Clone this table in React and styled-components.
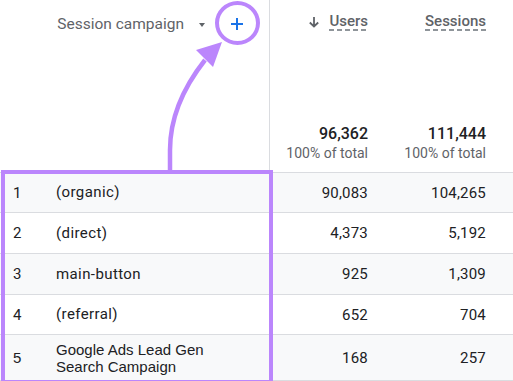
import React from 'react';
import styled, { createGlobalStyle } from 'styled-components';

const rows = [
  { n: 1, label: '(organic)', users: '90,083', sessions: '104,265', h: 40 },
  { n: 2, label: '(direct)', users: '4,373', sessions: '5,192', h: 41 },
  { n: 3, label: 'main-button', users: '925', sessions: '1,309', h: 41 },
  { n: 4, label: '(referral)', users: '652', sessions: '704', h: 40 },
  { n: 5, label: 'Google Ads Lead Gen Search Campaign', users: '168', sessions: '257', h: 46, tall: true },
];

const metrics = [
  { name: 'Users', total: '96,362', sorted: true },
  { name: 'Sessions', total: '111,444' },
];

export default function App() {
  return (
    <Page>
      <GlobalStyle />
      <Table>
        <DimHead>
          <DimTitle>Session campaign</DimTitle>
          <Caret />
          <AddButton>
            <svg width="12" height="12" viewBox="0 0 12 12">
              <path d="M6 0v12M0 6h12" stroke="#1a73e8" strokeWidth="2" />
            </svg>
          </AddButton>
        </DimHead>
        {metrics.map(m => (
          <MetricHead key={m.name}>
            <MetricTitle>
              {m.sorted && (
                <svg width="12" height="12" viewBox="0 0 12 12">
                  <path d="M6 1v9.5M1.8 6.5L6 10.5l4.2-4" stroke="#5f6368" strokeWidth="1.8" fill="none" />
                </svg>
              )}
              <Dashed>{m.name}</Dashed>
            </MetricTitle>
            <Totals>
              <Total>{m.total}</Total>
              <Share>100% of total</Share>
            </Totals>
          </MetricHead>
        ))}
        <HeadFill />

        {rows.map((r, i) => (
          <React.Fragment key={r.n}>
            <DimCell $odd={i % 2 === 0} $h={r.h}>
              <Index $alt={r.tall}>{r.n}</Index>
              <Label $alt={r.tall}>{r.tall ? <>Google Ads Lead Gen<br />Search Campaign</> : r.label}</Label>
            </DimCell>
            <NumCell $odd={i % 2 === 0} $h={r.h}>{r.users}</NumCell>
            <NumCell $odd={i % 2 === 0} $h={r.h}>{r.sessions}</NumCell>
            <FillCell $odd={i % 2 === 0} $h={r.h} />
          </React.Fragment>
        ))}
      </Table>

      <Highlight />
      <Ring />
      <Pointer width="513" height="381" viewBox="0 0 513 381">
        <path d="M170 172 L170 150 C170 118 183 88 205 60" stroke="#bb86fc" strokeWidth="4.5" fill="none" />
        <polygon points="222,42 196,50 213,67" fill="#bb86fc" />
      </Pointer>
    </Page>
  );
}

const GlobalStyle = createGlobalStyle`
  body {
    margin: 0;
    background: #fff;
    font-family: Roboto, "Liberation Sans", sans-serif;
    overflow: hidden;
  }
`;

const Page = styled.div`
  position: relative;
  width: 513px;
  height: 381px;
  overflow: hidden;
  background: #fff;
`;

const Table = styled.div`
  display: grid;
  grid-template-columns: 270px 108px 118px 1fr;
`;

const DimHead = styled.div`
  height: 173px;
  box-sizing: border-box;
  border-right: 1px solid #dadce0;
  border-bottom: 1px solid #dadce0;
  display: flex;
  align-items: flex-start;
  justify-content: flex-end;
  padding: 13px 20px 0 0;
`;

const DimTitle = styled.span`
  font-size: 15.5px;
  line-height: 23px;
  color: #5f6368;
`;

const Caret = styled.span`
  width: 0;
  height: 0;
  margin: 10px 0 0 15px;
  border-left: 3.5px solid transparent;
  border-right: 3.5px solid transparent;
  border-top: 4px solid #5f6368;
`;

const AddButton = styled.span`
  width: 24px;
  height: 22px;
  margin-left: 20px;
  display: flex;
  align-items: center;
  justify-content: center;
`;

const MetricHead = styled.div`
  height: 173px;
  box-sizing: border-box;
  border-bottom: 1px solid #dadce0;
  display: flex;
  flex-direction: column;
  justify-content: space-between;
  align-items: flex-end;
  padding: 12px 10px 10px 0;
`;

const MetricTitle = styled.div`
  display: flex;
  align-items: center;
  gap: 9px;
  font-size: 15px;
  font-weight: 500;
  color: #5f6368;
`;

const Dashed = styled.span`
  line-height: 19px;
  background: repeating-linear-gradient(to right, #8f959a 0 5px, transparent 5px 8px) left bottom / 100% 2px no-repeat;
`;

const Totals = styled.div`
  display: flex;
  flex-direction: column;
  align-items: flex-end;
  gap: 2px;
`;

const Total = styled.span`
  font-size: 16px;
  font-weight: 500;
  color: #202124;
  line-height: 19px;
`;

const Share = styled.span`
  font-size: 14px;
  color: #5f6368;
  line-height: 17px;
`;

const HeadFill = styled.div`
  height: 173px;
  box-sizing: border-box;
  border-bottom: 1px solid #dadce0;
`;

const BodyCell = styled.div`
  height: ${p => p.$h}px;
  box-sizing: border-box;
  border-bottom: 1px solid #dadce0;
  background: ${p => (p.$odd ? '#f8f9fa' : '#fff')};
  display: flex;
  align-items: center;
`;

const DimCell = styled(BodyCell)`
  border-right: 1px solid #dadce0;
  padding-left: 13px;
`;

const Index = styled.span`
  width: 43px;
  font-size: 15px;
  color: #202124;
  font-family: ${p => (p.$alt ? '"Liberation Sans", Arial, sans-serif' : 'Roboto, sans-serif')};
`;

const Label = styled.span`
  font-size: 15px;
  line-height: 17px;
  letter-spacing: ${p => (p.$alt ? 0 : 0.4)}px;
  color: #202124;
  font-family: ${p => (p.$alt ? '"Liberation Sans", Arial, sans-serif' : 'Roboto, sans-serif')};
`;

const NumCell = styled(BodyCell)`
  justify-content: flex-end;
  padding-right: 10px;
  font-size: 15px;
  color: #202124;
  letter-spacing: 0.2px;
`;

const FillCell = styled(BodyCell)``;

const Highlight = styled.div`
  position: absolute;
  left: 1px;
  top: 170px;
  width: 272px;
  height: 214px;
  box-sizing: border-box;
  border: 4px solid #bb86fc;
  pointer-events: none;
`;

const Ring = styled.div`
  position: absolute;
  left: 215px;
  top: 1px;
  width: 45px;
  height: 44px;
  box-sizing: border-box;
  border: 4px solid #bb86fc;
  border-radius: 50%;
  pointer-events: none;
`;

const Pointer = styled.svg`
  position: absolute;
  left: 0;
  top: 0;
  pointer-events: none;
`;
